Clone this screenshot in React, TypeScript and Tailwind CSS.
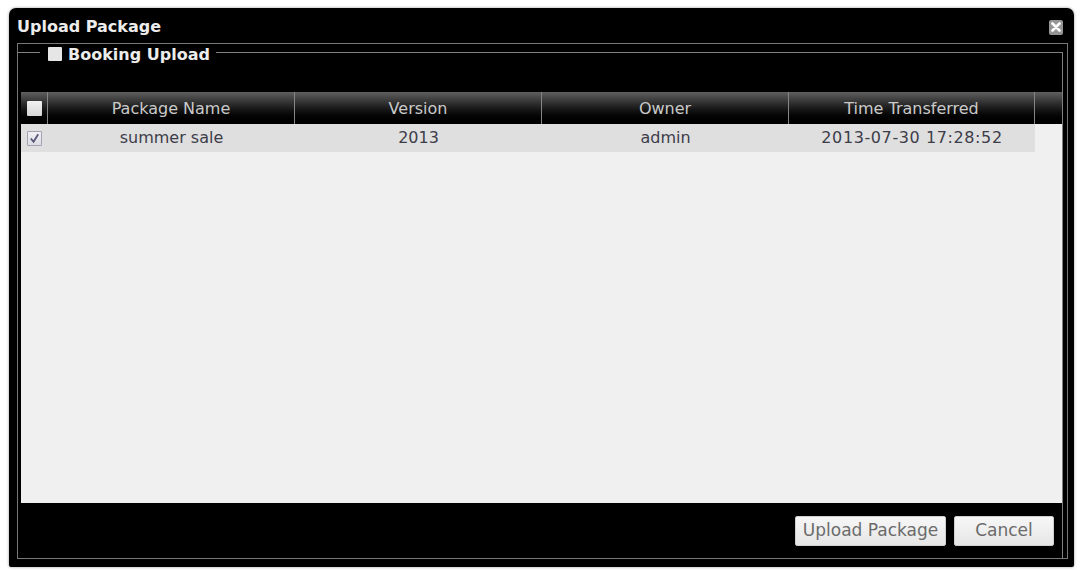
import React from 'react'

const columns = ['Package Name', 'Version', 'Owner', 'Time Transferred']

const rows = [
  { name: 'summer sale', version: '2013', owner: 'admin', time: '2013-07-30 17:28:52', checked: true },
]

// shared grid so header and body columns line up
const gridCols = 'grid grid-cols-[27px_247px_247px_247px_246px_1fr]'

function CheckMark() {
  return (
    <svg viewBox="0 0 14 14" className="h-[13px] w-[13px]">
      <path d="M3 7 L6 10.5 L11 2.5" fill="none" stroke="#555578" strokeWidth="1.9" />
    </svg>
  )
}

function CloseButton() {
  return (
    <button
      type="button"
      aria-label="Close"
      className="mt-[1px] flex h-[15px] w-[14px] items-center justify-center rounded-[2px] bg-[#959595]"
    >
      <svg viewBox="0 0 10 10" className="h-[10px] w-[10px]">
        <path d="M1.5 1.5 L8.5 8.5 M8.5 1.5 L1.5 8.5" stroke="#ffffff" strokeWidth="2.6" strokeLinecap="round" />
      </svg>
    </button>
  )
}

export default function App() {
  return (
    <div className="h-[570px] w-[1082px] bg-white pl-[9px] pt-[8px] font-['DejaVu_Sans',sans-serif]">
      {/* Dialog */}
      <div className="flex h-[559px] w-[1065px] flex-col rounded-t-[7px] rounded-b-[2px] bg-black shadow-[0_0_3px_#9a9a9a]">
        {/* Title bar */}
        <div className="flex h-[35px] items-center justify-between pl-[8px] pr-[11px] pt-[2px]">
          <span className="text-[16px] font-bold text-[#ececec]">Upload Package</span>
          <CloseButton />
        </div>

        {/* Content panel */}
        <div className="ml-[8px] flex h-[516px] w-[1051px] flex-col border border-[#777]">
          {/* Legend row */}
          <div className="flex h-[18px] items-center">
            <div className="h-[10px] w-[22px] self-end border-t border-[#808080]" />
            <span className="ml-[8px] mt-[2px] h-[14px] w-[14px] rounded-[1px] bg-[#e6e6e6]" />
            <span className="ml-[6px] mt-[3px] text-[16px] font-bold text-[#ececec]">Booking Upload</span>
            <div className="ml-[6px] mr-[4px] h-[10px] flex-1 self-end border-r border-t border-[#808080]" />
          </div>

          <div className="mr-[4px] flex flex-1 flex-col border-r border-[#808080] pl-[3px]">
            <div className="h-[30px]" />

            {/* Table header */}
            <div className={`${gridCols} h-[32px] bg-linear-to-b from-[#606060] via-[#161616] via-55% to-black`}>
              <div className="flex items-center justify-center border-r border-[#858585]">
                <span className="h-[15px] w-[15px] rounded-[1px] bg-linear-to-b from-[#f2f2f2] to-[#d6d6d6]" />
              </div>
              {columns.map((col) => (
                <div
                  key={col}
                  className="flex items-center justify-center border-r border-[#858585] pt-[1px] text-[16px] text-[#cacaca]"
                >
                  {col}
                </div>
              ))}
              <div />
            </div>

            {/* Table body */}
            <div className="flex-1 bg-[#f0f0f0]">
              {rows.map((row) => (
                <div key={row.name} className={`${gridCols} h-[28px] text-[16px] text-[#3d3d4a]`}>
                  <div className="flex items-center justify-center bg-[#dfdfdf]">
                    <span className="flex h-[15px] w-[15px] items-center justify-center rounded-[1px] border border-[#a3a3b3] bg-linear-to-b from-[#f0f0f5] to-[#dcdce4]">
                      {row.checked && <CheckMark />}
                    </span>
                  </div>
                  <div className="flex items-center justify-center bg-[#dfdfdf]">{row.name}</div>
                  <div className="flex items-center justify-center bg-[#dfdfdf]">{row.version}</div>
                  <div className="flex items-center justify-center bg-[#dfdfdf]">{row.owner}</div>
                  <div className="flex items-center justify-center bg-[#dfdfdf] tracking-[0.6px]">{row.time}</div>
                  <div />
                </div>
              ))}
            </div>

            {/* Footer buttons */}
            <div className="flex h-[55px] items-center justify-end gap-[8px] pr-[8px]">
              <button
                type="button"
                className="h-[30px] w-[151px] rounded-[2px] border border-[#cfcfcf] bg-linear-to-b from-[#f7f7f7] to-[#e6e6e6] text-[17px] text-[#6b6b6b]"
              >
                Upload Package
              </button>
              <button
                type="button"
                className="h-[30px] w-[100px] rounded-[2px] border border-[#cfcfcf] bg-linear-to-b from-[#f7f7f7] to-[#e6e6e6] text-[17px] text-[#6b6b6b]"
              >
                Cancel
              </button>
            </div>
          </div>
        </div>
      </div>
    </div>
  )
}
